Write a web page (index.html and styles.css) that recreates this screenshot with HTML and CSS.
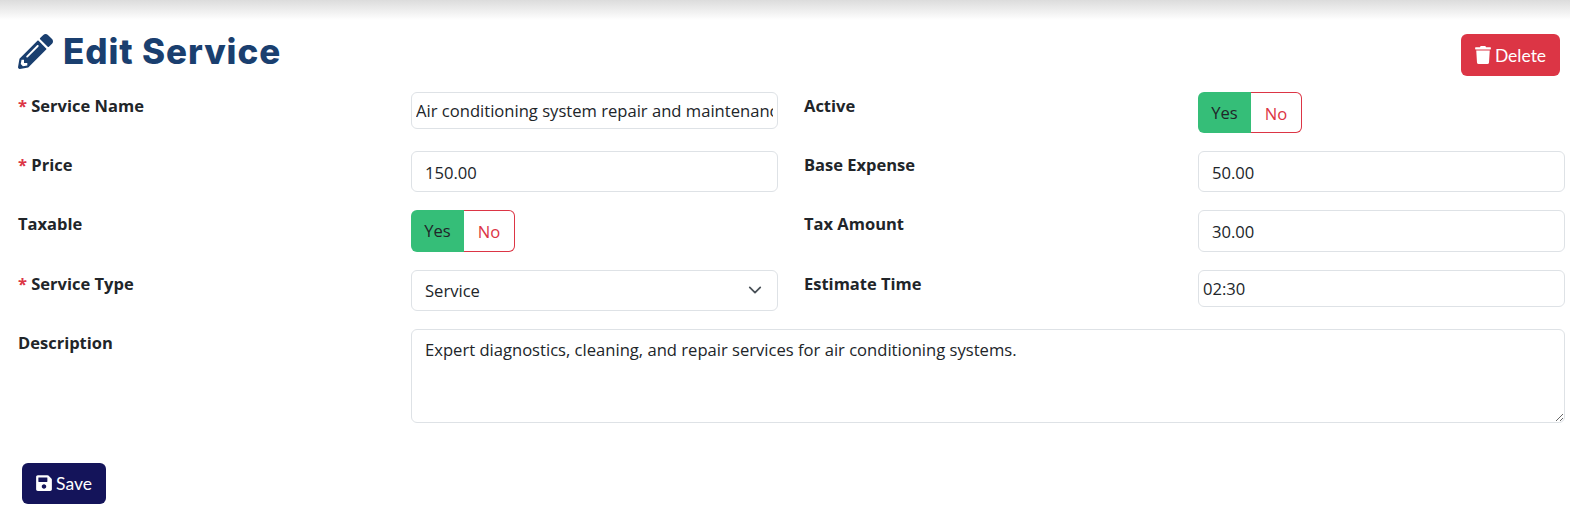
FILE: index.html
```html
<!DOCTYPE html>
<html lang="en">

<head>
    <meta charset="UTF-8">
    <title>Edit Service</title>
    <link rel="stylesheet" href="styles.css">
</head>

<body>
    <div class="top-shadow"></div>

    <div class="page-head">
        <h1 class="page-title">
            <svg class="title-icon" viewBox="0 0 512 512"><path fill="currentColor" d="M497.9 142.1l-46.1 46.1c-4.7 4.7-12.3 4.7-17 0l-111-111c-4.7-4.7-4.7-12.3 0-17l46.1-46.1c18.7-18.7 49.1-18.7 67.9 0l60.1 60.1c18.8 18.7 18.8 49.1 0 67.9zM284.2 99.8L21.6 362.4.4 483.9c-2.9 16.4 11.4 30.6 27.8 27.8l121.5-21.3 262.6-262.6c4.7-4.7 4.7-12.3 0-17l-111-111c-4.8-4.7-12.4-4.7-17.1 0zM124.1 339.9c-5.5-5.5-5.5-14.3 0-19.8l154-154c5.5-5.5 14.3-5.5 19.8 0s5.5 14.3 0 19.8l-154 154c-5.5 5.5-14.3 5.5-19.8 0zM88 424h48v36.3l-64.5 11.3-31.1-31.1L51.7 376H88v48z"/></svg>
            Edit Service
        </h1>
        <button class="btn btn-delete">
            <svg class="btn-icon" viewBox="0 0 448 512"><path fill="currentColor" d="M432 32H312l-9.4-18.7A24 24 0 0 0 281.1 0H166.8a23.72 23.72 0 0 0-21.4 13.3L136 32H16A16 16 0 0 0 0 48v32a16 16 0 0 0 16 16h416a16 16 0 0 0 16-16V48a16 16 0 0 0-16-16zM53.2 467a48 48 0 0 0 47.9 45h245.8a48 48 0 0 0 47.9-45L416 128H32z"/></svg>
            Delete
        </button>
    </div>

    <form class="service-form">
        <label class="field-label"><span class="required">*</span> Service Name</label>
        <div><input class="field-input field-short" type="text" value="Air conditioning system repair and maintenance"></div>
        <label class="field-label field-label-right">Active</label>
        <div class="toggle">
            <span class="toggle-yes">Yes</span>
            <span class="toggle-no">No</span>
        </div>

        <label class="field-label"><span class="required">*</span> Price</label>
        <input class="field-input" type="text" value="150.00">
        <label class="field-label field-label-right">Base Expense</label>
        <input class="field-input" type="text" value="50.00">

        <label class="field-label">Taxable</label>
        <div class="toggle">
            <span class="toggle-yes">Yes</span>
            <span class="toggle-no">No</span>
        </div>
        <label class="field-label field-label-right">Tax Amount</label>
        <input class="field-input" type="text" value="30.00">

        <label class="field-label"><span class="required">*</span> Service Type</label>
        <select class="field-input field-select">
            <option>Service</option>
        </select>
        <label class="field-label field-label-right">Estimate Time</label>
        <div><input class="field-input field-short" type="text" value="02:30"></div>

        <label class="field-label">Description</label>
        <textarea class="field-input field-area">Expert diagnostics, cleaning, and repair services for air conditioning systems.</textarea>
    </form>

    <button class="btn btn-save">
        <svg class="btn-icon" viewBox="0 0 448 512"><path fill="currentColor" d="M433.941 129.941l-83.882-83.882A48 48 0 0 0 316.118 32H48C21.49 32 0 53.49 0 80v352c0 26.51 21.49 48 48 48h352c26.51 0 48-21.49 48-48V163.882a48 48 0 0 0-14.059-33.941zM224 416c-35.346 0-64-28.654-64-64 0-35.346 28.654-64 64-64s64 28.654 64 64c0 35.346-28.654 64-64 64zm96-304.52V212c0 6.627-5.373 12-12 12H76c-6.627 0-12-5.373-12-12V108c0-6.627 5.373-12 12-12h228.52c3.183 0 6.235 1.264 8.485 3.515l3.48 3.48A11.996 11.996 0 0 1 320 111.48z"/></svg>
        Save
    </button>
</body>

</html>
```

FILE: styles.css
```css
* {
    box-sizing: border-box;
    margin: 0;
    padding: 0;
}

body {
    font-family: "Open Sans", "Noto Sans", sans-serif;
    font-size: 16.6px;
    color: #212529;
    background-color: #fff;
    overflow: hidden;
}

.top-shadow {
    height: 20px;
    background: linear-gradient(#dcdcdc, #f6f6f6 75%, #fff);
}

.page-head {
    display: flex;
    justify-content: space-between;
    align-items: flex-start;
    height: 71.9px;
    padding: 9px 10px 0 18px;
}

.page-title {
    display: flex;
    align-items: center;
    gap: 10px;
    font-family: Inter, sans-serif;
    font-size: 35px;
    font-weight: 800;
    letter-spacing: 0.9px;
    line-height: 44px;
    color: #1a3f6f;
}

.title-icon {
    width: 35px;
    height: 35px;
}

.btn {
    display: flex;
    align-items: center;
    gap: 4px;
    border: none;
    border-radius: 6px;
    color: #fff;
    font-family: Lato, sans-serif;
    font-size: 17.5px;
    cursor: pointer;
}

.btn-icon {
    width: 16px;
    height: 18px;
}

.btn-delete {
    width: 99px;
    height: 42px;
    margin-top: 5px;
    justify-content: center;
    background-color: #dc3545;
}

.btn-save {
    width: 84px;
    height: 41px;
    margin: 40px 0 0 22px;
    justify-content: center;
    background-color: #14145a;
}

.service-form {
    display: grid;
    grid-template-columns: 393px 367px 420px 367px;
    grid-template-rows: 41.25px 41.25px 41.25px 41.25px 94px;
    row-gap: 18px;
    padding-left: 18px;
}

.field-label {
    padding-top: 2px;
    font-size: 16.5px;
    font-weight: 700;
    color: #212529;
}

.field-label-right {
    padding-left: 26px;
}

.required {
    color: #dc3545;
}

.field-input {
    display: block;
    width: 100%;
    height: 100%;
    padding: 1px 13px 0;
    border: 1px solid #dee2e6;
    border-radius: 6px;
    background-color: #fff;
    color: #212529;
    font-family: "Open Sans", "Noto Sans", sans-serif;
    font-size: 16.6px;
}

.field-short {
    height: 37px;
    padding: 0 4px;
}

.field-select {
    appearance: none;
    background-image: url("data:image/svg+xml,%3csvg xmlns='http://www.w3.org/2000/svg' viewBox='0 0 16 16'%3e%3cpath fill='none' stroke='%23495057' stroke-linecap='round' stroke-linejoin='round' stroke-width='2' d='m2 5 6 6 6-6'/%3e%3c/svg%3e");
    background-repeat: no-repeat;
    background-position: right 13px center;
    background-size: 18px 14px;
}

.field-area {
    grid-column: 2 / 5;
    height: 94px;
    padding: 8px 13px;
    line-height: 24px;
    resize: vertical;
}

.toggle {
    display: flex;
    width: 104px;
    height: 41.6px;
    border-radius: 6px;
    line-height: 41px;
    text-align: center;
}

.toggle-yes {
    width: 53px;
    border-radius: 6px 0 0 6px;
    background-color: #35be78;
    color: #212529;
}

.toggle-no {
    flex: 1;
    border: 1px solid #dc3545;
    border-left: none;
    border-radius: 0 6px 6px 0;
    color: #dc3545;
}
```
